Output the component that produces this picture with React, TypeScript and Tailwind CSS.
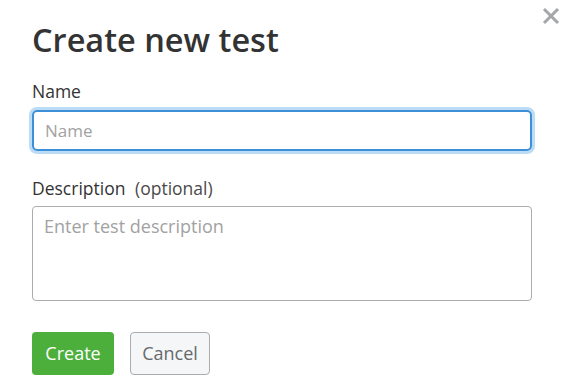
export default function App() {
  return (
    <div
      className="relative w-[566px] h-[392px] bg-white pl-8 pt-[20px] overflow-hidden"
      style={{ fontFamily: '"Open Sans", "Noto Sans", sans-serif' }}
    >
      <button className="absolute right-[6px] top-[7px] w-[18px] h-[18px] flex items-center justify-center" aria-label="Close">
        <svg width="18" height="18" viewBox="0 0 18 18">
          <path d="M2 2 L16 16 M16 2 L2 16" stroke="#a3a7aa" strokeWidth="3" strokeLinecap="butt" />
        </svg>
      </button>
      <h1 className="text-[32.5px] font-semibold leading-[40px] text-[#333333]">Create new test</h1>
      <div className="mt-[19px] text-[17.5px] leading-[24px] text-[#333333]">Name</div>
      <input
        className="mt-[7px] block w-[500px] h-[41px] rounded-[5px] border-2 border-[#3d8fd8] shadow-[0_0_0_3px_#bcdcf5] px-[11px] text-[17px] text-[#333] outline-none placeholder:text-[#a2a2a2]"
        placeholder="Name"
      />
      <div className="mt-[25px] text-[17.5px] leading-[24px] text-[#333333]">
        Description <span className="ml-[5px] text-[#4a4a4a]">(optional)</span>
      </div>
      <textarea
        className="mt-[6px] block w-[500px] h-[95px] rounded-[4px] border-[1.5px] border-[#a9adb0] px-[11px] pt-[8px] text-[18px] leading-[22px] text-[#333] outline-none resize-none placeholder:text-[#a2a2a2]"
        placeholder="Enter test description"
      />
      <div className="mt-[31px] flex gap-4">
        <button className="h-[43px] w-[82px] rounded-[4px] bg-[#4caf3c] text-white text-[18px]">Create</button>
        <button className="h-[43px] w-[80px] rounded-[4px] bg-[#f4f6f7] border-[1.5px] border-[#a9adb0] text-[#66696c] text-[18px]">Cancel</button>
      </div>
    </div>
  );
}
